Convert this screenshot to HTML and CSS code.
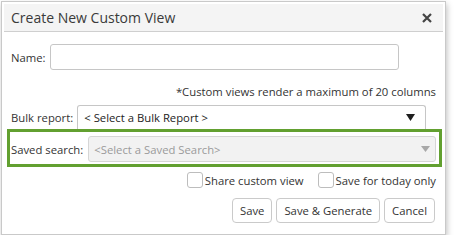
FILE: index.html
```html
<!DOCTYPE html>
<html lang="en">
<head>
    <meta charset="UTF-8">
    <title>Create New Custom View</title>
    <link rel="stylesheet" href="styles.css">
</head>
<body>

    <div class="dialog">
        <div class="dialog-header">
            <span class="dialog-title">Create New Custom View</span>
            <svg class="close-icon" width="10" height="10" viewBox="0 0 10 10">
                <path d="M1 1 L9 9 M9 1 L1 9" stroke="#444" stroke-width="2.2" />
            </svg>
        </div>

        <div class="dialog-body">
            <div class="form-row">
                <label class="field-label">Name:</label>
                <div class="text-input name-input"></div>
            </div>

            <p class="note">*Custom views render a maximum of 20 columns</p>

            <div class="form-row">
                <label class="field-label">Bulk report:</label>
                <div class="select bulk-select">
                    <span>&lt; Select a Bulk Report &gt;</span>
                    <svg width="9" height="7" viewBox="0 0 9 7"><path d="M0 0 H9 L4.5 7 Z" fill="#1e1e1e" /></svg>
                </div>
            </div>

            <div class="form-row highlight">
                <label class="field-label">Saved search:</label>
                <div class="select select-disabled">
                    <span>&lt;Select a Saved Search&gt;</span>
                    <svg width="9" height="6" viewBox="0 0 9 6"><path d="M0 0 H9 L4.5 6 Z" fill="#a8a8a8" /></svg>
                </div>
            </div>

            <div class="options">
                <label class="check"><span class="checkbox"></span>Share custom view</label>
                <label class="check"><span class="checkbox"></span>Save for today only</label>
            </div>

            <div class="actions">
                <button class="btn">Save</button>
                <button class="btn">Save &amp; Generate</button>
                <button class="btn">Cancel</button>
            </div>
        </div>
    </div>

</body>
</html>
```

FILE: styles.css
```css
body {
    margin: 0;
    background-color: #fff;
    font-family: 'Open Sans', 'Noto Sans', sans-serif;
    font-size: 11.3px;
    color: #333;
}

.dialog {
    width: 439px;
    margin: 1px 0 0 1px;
    padding: 2px;
    border: 1px solid #c9c9c9;
    background-color: #fff;
    box-shadow: 1px 3px 6px rgba(0, 0, 0, 0.25);
}

.dialog-header {
    display: flex;
    align-items: center;
    justify-content: space-between;
    height: 27px;
    padding: 0 11px 0 7px;
    background-color: #f4f4f4;
    border-bottom: 1px solid #cfcfcf;
}

.dialog-title {
    font-size: 14px;
    color: #3a3a3a;
}

.dialog-body {
    padding: 12px 7px 9px 7px;
}

.form-row {
    display: flex;
    align-items: center;
}

.field-label {
    margin-right: 4px;
    white-space: nowrap;
}

.text-input {
    height: 24px;
    border: 1px solid #c6c6c6;
    border-radius: 3px;
}

.name-input {
    width: 347px;
}

.note {
    margin: 14px 0 5px 0;
    text-align: right;
    line-height: 16px;
}

.select {
    display: flex;
    align-items: center;
    justify-content: space-between;
    height: 23px;
    padding: 0 10px 0 6px;
    border: 1px solid #c6c6c6;
    border-radius: 3px;
    color: #222;
}

.bulk-select {
    width: 331px;
    border-bottom: none;
    border-bottom-left-radius: 0;
    border-bottom-right-radius: 0;
}

.highlight {
    margin: 0 -6px 0 -4px;
    padding: 4px 3px 2px 1px;
    border: 3px solid #62a030;
}

.select-disabled {
    flex: 1;
    height: 24px;
    margin-left: 1px;
    padding: 0 5px 0 5px;
    background-color: #f2f2f2;
    border-color: #d6d6d6;
    color: #9a9a9a;
}

.options {
    display: flex;
    justify-content: flex-end;
    gap: 14px;
    margin-top: 5px;
}

.check {
    display: flex;
    align-items: center;
}

.checkbox {
    width: 14px;
    height: 14px;
    margin-right: 2px;
    border: 1px solid #bdbdbd;
    border-radius: 3px;
    background-color: #fff;
}

.actions {
    display: flex;
    justify-content: flex-end;
    gap: 4px;
    margin-top: 10px;
    padding-right: 1px;
}

.btn {
    height: 25px;
    padding: 0 7px;
    border: 1px solid #cacaca;
    border-radius: 4px;
    background-color: #fff;
    font-family: inherit;
    font-size: 11.3px;
    color: #333;
}
```
